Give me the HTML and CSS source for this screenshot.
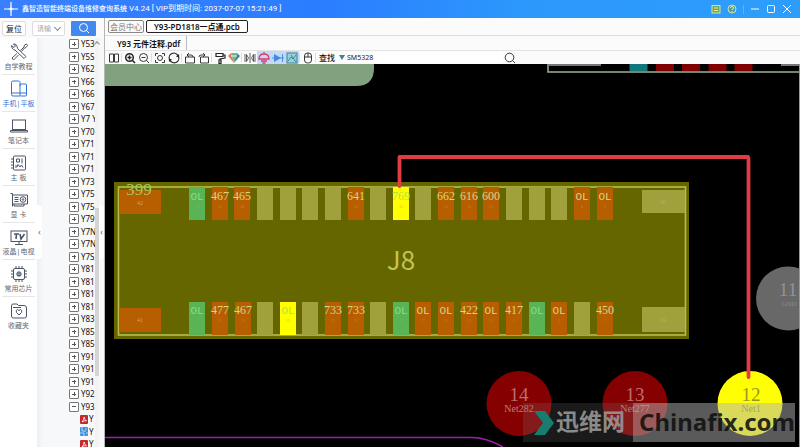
FILE: index.html
```html
<!DOCTYPE html>
<html lang="zh-CN">
<head>
<meta charset="utf-8">
<title>鑫智造智能终端设备维修查询系统</title>
<link rel="stylesheet" href="styles.css">
</head>
<body>
<div class="app">
  <header class="titlebar">
    <svg class="logo" viewBox="0 0 14 14"><path d="M7 0v5M7 9v5M0 7h5M9 7h5" stroke="#fff" stroke-width="1.2"/><path d="M7 4l1 2 2 1-2 1-1 2-1-2-2-1 2-1z" fill="#fff"/></svg>
    <h1><span class="name">鑫智造智能终端设备维修查询系统</span> V4.24 [ VIP到期时间: 2037-07-07 15:21:49 ]</h1>
    <div class="window-buttons">
      <button aria-label="消息"><svg viewBox="0 0 10 10"><rect x="1" y="1.5" width="8" height="7.500" fill="#6aa870" stroke="#d5e6a0"/><path d="M3 4h4M3 6.500h4" stroke="#ffe66b"/></svg></button>
      <button aria-label="帮助"><svg viewBox="0 0 10 10"><circle cx="5" cy="5" r="4" fill="#4f9dab" stroke="#cfe4a8"/><path d="M3.500 4q0-1.500 1.500-1.500T6.500 4Q6.500 5 5 5.500V6M5 7v1" stroke="#f3e98c" fill="none"/></svg></button>
      <span class="rule"></span>
      <button aria-label="最小化"><svg viewBox="0 0 10 10"><path d="M1 5h8" stroke="#fff"/></svg></button>
      <button aria-label="最大化"><svg viewBox="0 0 10 10"><rect x="1.500" y="1.500" width="7" height="7" rx="1" fill="none" stroke="#fff"/></svg></button>
      <button aria-label="关闭"><svg viewBox="0 0 10 10"><path d="M1 1l8 8M9 1L1 9" stroke="#fff"/></svg></button>
    </div>
  </header>

  <div class="body">
    <aside class="side">
      <form class="filter">
        <button type="button" class="reset">复位</button>
        <span class="pick"><select aria-label="品牌"><option>请输</option></select></span>
        <button type="button" class="find" aria-label="搜索"><svg viewBox="0 0 12 12"><circle cx="5.500" cy="5.500" r="4" fill="none" stroke="#fff"/><path d="M8.500 8.500l2.500 2.500" stroke="#fff"/></svg></button>
      </form>
      <div class="columns">
        <nav class="menu">
          <a href="#"><svg viewBox="0 0 20 18"><path d="M6 7l9 8.500 2-2L8.500 5.500M6 7Q3 7 2.500 2.500L5 4.500 6.500 3 4.500 1Q8 .5 8.500 5.500M11.500 7.500L15 4l.5-2L17.500 1 18.500 2.500 17 4.500 15.500 5 12.500 8.500M8 10.500L3 15l1.500 2 5-5"/></svg><span>自学教程</span></a>
          <a href="#" class="on"><svg viewBox="0 0 20 18"><path d="M11 6V2.500Q11 1 9.500 1H4Q2.500 1 2.500 2.500v12Q2.500 16 4 16h7M2.500 13H11"/><rect x="11" y="4" width="6.500" height="12" rx="1"/><path d="M11 13h6.500"/></svg><span>手机|平板</span></a>
          <a href="#"><svg viewBox="0 0 20 18"><rect x="3.500" y="3" width="13" height="9.500"/><path d="M1.500 13.500h17v1.500h-17z"/></svg><span>笔记本</span></a>
          <a href="#"><svg viewBox="0 0 20 18"><rect x="4.500" y="2" width="12" height="14" rx="1"/><path d="M2 5h3M2 8h3M2 11h3M2 14h3M7.500 5h3v3h-3zM13 4.500v5M8 13l1-2.500L11 13l1.500-2 1.500 2.500M7 11v3"/></svg><span>主 板</span></a>
          <a href="#"><svg viewBox="0 0 20 18"><path d="M1.500 2.500h2v13M3.500 4h15v9h-15M5 13v2h10v-2M5.500 6.500h4M5.500 8.500h4M5.500 10.500h4"/><circle cx="14" cy="8.500" r="2.800"/><circle cx="14" cy="8.500" r=".8"/></svg><span>显 卡</span></a>
          <a href="#"><svg viewBox="0 0 20 18"><rect x="2" y="3" width="16" height="10.500"/><path d="M10 13.500v2.500M6 16.500h8"/><path d="M5 6h5M7.500 6L7 11M11 6l1 5 3.500-5" stroke-width="1.600"/></svg><span>液晶|电视</span></a>
          <a href="#"><svg viewBox="0 0 20 18"><rect x="4.500" y="3.500" width="11" height="11" rx="1.500"/><circle cx="10" cy="9" r="2.200"/><path d="M9 8h2v2.500H9zM7 3V1M10 3V1M13 3V1M7 15v2M10 15v2M13 15v2M4 6H2M4 9H2M4 12H2M16 6h2M16 9h2M16 12h2"/></svg><span>常用芯片</span></a>
          <a href="#"><svg viewBox="0 0 20 18"><path d="M2.500 4Q2.500 2 4 2h4l1.500 1.500H15Q17.500 3.500 17.500 6v8q0 2-2 2h-11q-2 0-2-2zM4 5.500h8"/><path d="M10 13L7.500 10.500Q6.500 8 8.500 7.500L10 8.500 11.500 7.500Q13.500 8 12.500 10.500z"/></svg><span>收藏夹</span></a>
        </nav>
        <div class="handle"><button aria-label="收起菜单">‹</button></div>
        <ul class="tree">
          <li>Y53</li><li>Y5S</li><li>Y62</li><li>Y66</li><li>Y66</li><li>Y67</li><li>Y7 Y</li><li>Y70</li><li>Y71</li><li>Y71</li>
          <li>Y71</li><li>Y73</li><li>Y75</li><li>Y75</li><li>Y79</li><li>Y7N</li><li>Y7N</li><li>Y7S</li><li>Y81</li><li>Y81</li>
          <li>Y81</li><li>Y81</li><li>Y83</li><li>Y85</li><li>Y85</li><li>Y91</li><li>Y91</li><li>Y91</li><li>Y92</li><li class="open">Y93</li>
          <li class="file"><svg viewBox="0 0 8 9"><rect width="8" height="9" rx="1" fill="#c5282d"/><path d="M2 7Q4 5 4 2q1 3 2.500 4Q4 5 2 7" stroke="#fff" fill="none" stroke-width=".8"/></svg>Y</li>
          <li class="file"><svg viewBox="0 0 8 9"><rect width="8" height="9" rx="1" fill="#3f8fdd"/><path d="M2 0v4h4M0 6h4v3M6 1v2M6 6h2" stroke="#cfe6fb" fill="none" stroke-width=".8"/></svg>Y</li>
          <li class="file"><svg viewBox="0 0 8 9"><rect width="8" height="9" rx="1" fill="#c5282d"/><path d="M2 7Q4 5 4 2q1 3 2.500 4Q4 5 2 7" stroke="#fff" fill="none" stroke-width=".8"/></svg>Y</li>
        </ul>
        <div class="scroll"><span class="up"></span><span class="thumb"></span></div>
        <div class="handle narrow"><button aria-label="收起列表">‹</button></div>
      </div>
    </aside>

    <main class="work">
      <div class="tabs"><button class="muted">会员中心</button><button class="current">Y93-PD1818一点通.pcb</button></div>
      <div class="doc-tabs"><button>Y93 元件注释.pdf</button></div>
      <div class="toolbar">
        <button aria-label="分栏"><svg viewBox="0 0 12 12"><path d="M1.500 2h4v8h-4zM6.500 2h4v8h-4z"/></svg></button><i></i>
        <button aria-label="放大"><svg viewBox="0 0 12 12"><circle cx="5.500" cy="5.500" r="3.800" stroke-width="1.500"/><path d="M8.500 8.500L11 11M3.500 5.500h4M5.500 3.500v4" stroke-width="1.500"/></svg></button>
        <button aria-label="缩小"><svg viewBox="0 0 12 12"><circle cx="5.500" cy="5.500" r="4"/><path d="M8.500 8.500L11 11M3.500 5.500h4"/></svg></button><i></i>
        <button aria-label="适应"><svg viewBox="0 0 12 12"><path d="M1.500 4V1.500H4M8 1.500h2.500V4M10.500 8v2.500H8M4 10.500H1.500V8"/><circle cx="6" cy="6" r="2.500"/></svg></button>
        <button aria-label="刷新"><svg viewBox="0 0 12 12"><path d="M1.500 7.500A4.500 4.500 0 0 1 10 4M10.500 4.500A4.500 4.500 0 0 1 2 8M8.500 4.500h2V2.500M3.500 7.500h-2v2" stroke-width="1.200"/></svg></button><i></i>
        <button aria-label="左转"><svg viewBox="0 0 12 12"><path d="M1.500 5h9v6h-9zM3 3h4q2 0 2 2M5 1L3 3l2 2"/></svg></button>
        <button aria-label="右转"><svg viewBox="0 0 12 12"><path d="M2.500 5h8v6h-8zM1 5q0-2 2-2h4M5 1l2 2-2 2"/></svg></button><i></i>
        <button aria-label="颜色"><svg viewBox="0 0 12 12"><path d="M2 1.500h7v3H2zM9 3h2v3L6 7v1M5 8h2v3.500H5z" stroke-width="1.200"/></svg></button>
        <button aria-label="图层"><svg viewBox="0 0 12 12"><path d="M0 4l3-3 3 10z" fill="#d98452" stroke="none"/><path d="M3 1h6L6 11z" fill="#69b59c" stroke="none"/><path d="M9 1l3 3-6 7z" fill="#398b83" stroke="none"/><path d="M3 4h6" stroke="#fff"/></svg></button><i></i>
        <button aria-label="镜像"><svg viewBox="0 0 12 12"><path d="M1 2v8M11 2v8M2.500 2.500L4.500 6l-2 3.500zM9.500 2.500L7.500 6l2 3.500zM6 1v10" stroke-width=".7"/></svg></button>
        <button aria-label="地线" class="active"><svg viewBox="0 0 12 12"><path d="M1 7Q1 2 6 2t5 5zM6 0v2M3 9h6M4.500 11h3" stroke="#d63d67" stroke-width="1.300"/></svg></button>
        <button aria-label="二极管" class="active"><svg viewBox="0 0 12 12"><path d="M0 6h12M10.500 2v8" stroke="#4289df"/><path d="M2 2l7 4-7 4z" fill="#4289df" stroke="none"/></svg></button>
        <button aria-label="图片" class="active"><svg viewBox="0 0 12 12"><rect x="1" y="1" width="10" height="10" fill="#9bd0d7" stroke="#347996"/><path d="M2 9l3-4 2 2 3-4M5 3l5 7" stroke="#28839b"/></svg></button><i></i>
        <button aria-label="鼠标"><svg viewBox="0 0 12 12"><rect x="2.500" y="1" width="7" height="10" rx="3"/><path d="M2.500 5h7M6 1v4"/></svg></button><i></i>
        <label for="query">查找</label><span class="drop"></span>
        <input id="query" type="text" value="SM5328">
        <button aria-label="查找"><svg viewBox="0 0 12 12"><circle cx="5.500" cy="5.500" r="4.300"/><path d="M8.500 8.500L11 11"/></svg></button>
      </div>
      <div class="canvas">
        <svg class="board" viewBox="105 64 695 383" preserveAspectRatio="xMinYMin slice">
          <path d="M105 64h269v4q0 18-18 18H105z" fill="#81a17f"/>
          <path d="M548 64v8h252" fill="none" stroke="#9fb098" stroke-width="1.500"/>
          <path d="M549 65h52M781 65h19" stroke="#777" stroke-width="2"/>
          <path d="M629.500 64h18v7h-18z" fill="#10787a"/>
          <path d="M656 64h18v7h-18zM682 64h18v7h-18zM708.500 64h18v7h-18zM734.500 64h18v7h-18z" fill="#7e0000"/>

          <rect x="114" y="182" width="575" height="157" fill="#666600"/>
          <rect x="118.500" y="187" width="567" height="148" fill="none" stroke="#b9bd4b" stroke-width="1.600"/>
          <g class="o"><rect x="119" y="190" width="42" height="24"/><rect x="119" y="308" width="42" height="24"/></g>
          <g class="k"><rect x="642" y="190" width="43" height="23"/><rect x="642" y="307" width="43" height="25"/></g>
          <g class="pads">
            <g class="g"><rect x="189" y="187"/><rect x="189" y="302"/><rect x="393" y="302"/><rect x="529" y="302"/></g>
            <g class="y"><rect x="393" y="187"/><rect x="280" y="302"/></g>
            <g class="k"><rect x="257" y="187"/><rect x="280" y="187"/><rect x="302" y="187"/><rect x="325" y="187"/><rect x="370" y="187"/><rect x="415" y="187"/><rect x="506" y="187"/><rect x="529" y="187"/><rect x="551" y="187"/><rect x="257" y="302"/><rect x="302" y="302"/><rect x="370" y="302"/><rect x="574" y="302"/></g>
            <g class="o"><rect x="212" y="187"/><rect x="234" y="187"/><rect x="348" y="187"/><rect x="438" y="187"/><rect x="461" y="187"/><rect x="483" y="187"/><rect x="574" y="187"/><rect x="597" y="187"/><rect x="212" y="302"/><rect x="235" y="302"/><rect x="325" y="302"/><rect x="348" y="302"/><rect x="415" y="302"/><rect x="438" y="302"/><rect x="461" y="302"/><rect x="483" y="302"/><rect x="506" y="302"/><rect x="551" y="302"/><rect x="597" y="302"/></g>
          </g>
          <g class="val">
            <text x="220" y="200">467</text><text x="242" y="200">465</text><text x="356" y="200">641</text><text x="401" y="200" class="hit">769</text><text x="446" y="200">662</text><text x="469" y="200">616</text><text x="491" y="200">600</text>
            <text x="220" y="314">477</text><text x="243" y="314">467</text><text x="333" y="314">733</text><text x="356" y="314">733</text><text x="469" y="314">422</text><text x="514" y="314">417</text><text x="605" y="314">450</text>
          </g>
          <g class="val ol">
            <text x="197" y="200" class="gr">OL</text><text x="582" y="200">OL</text><text x="605" y="200">OL</text>
            <text x="197" y="314" class="gr">OL</text><text x="288" y="314" class="hit">OL</text><text x="401" y="314" class="gr">OL</text><text x="423" y="314">OL</text><text x="446" y="314">OL</text><text x="491" y="314">OL</text><text x="537" y="314" class="gr">OL</text><text x="559" y="314">OL</text>
          </g>
          <g class="pin">
            <text x="197" y="208">38</text><text x="220" y="208">36</text><text x="242" y="208">34</text><text x="265" y="208">32</text><text x="288" y="208">30</text><text x="310" y="208">28</text><text x="333" y="208">26</text><text x="356" y="208">24</text><text x="378" y="208">22</text><text x="401" y="208">20</text><text x="423" y="208">18</text><text x="446" y="208">16</text><text x="469" y="208">14</text><text x="491" y="208">12</text><text x="514" y="208">10</text><text x="537" y="208">8</text><text x="559" y="208">6</text><text x="582" y="208">4</text><text x="605" y="208">2</text>
            <text x="197" y="322">37</text><text x="220" y="322">35</text><text x="243" y="322">33</text><text x="265" y="322">31</text><text x="288" y="322">29</text><text x="310" y="322">27</text><text x="333" y="322">25</text><text x="356" y="322">23</text><text x="378" y="322">21</text><text x="401" y="322">19</text><text x="423" y="322">17</text><text x="446" y="322">15</text><text x="469" y="322">13</text><text x="491" y="322">11</text><text x="514" y="322">9</text><text x="537" y="322">7</text><text x="559" y="322">5</text><text x="582" y="322">3</text><text x="605" y="322">1</text>
          </g>
          <g class="corner"><text x="140" y="205">42</text><text x="140" y="322">41</text><text x="663" y="204" class="dim">40</text><text x="663" y="322" class="dim">39</text></g>
          <text class="big" x="139" y="195">399</text>
          <text class="ref" x="401" y="270">J8</text>

          <circle cx="519" cy="403.500" r="32.500" fill="#850000"/><circle cx="635" cy="403.500" r="32.500" fill="#850000"/>
          <circle cx="750" cy="403.500" r="32.500" fill="#ffff00"/><circle cx="788" cy="298.500" r="32" fill="#686868"/>
          <g class="num"><text x="519" y="401">14</text><text x="635" y="401">13</text><text x="751" y="401" class="sel">12</text><text x="788" y="296" class="gnd">11</text></g>
          <g class="net"><text x="519" y="412">Net282</text><text x="635" y="412">Net277</text><text x="751" y="412" class="sel">Net1</text></g>
          <text class="gnd-net" x="789" y="306">GND</text>
          <path d="M399.500 186V157H748l.5 1.500V377" fill="none" stroke="#df3d42" stroke-width="3.800" stroke-linecap="round" stroke-linejoin="round"/>
          <path d="M105 437.500h365Q486 437 503 447" fill="none" stroke="#a21cae" stroke-width="1.500"/>
          <path d="M799.500 64v383" stroke="#999"/>

          <path d="M523 403h110v39H523z" fill="#808080" fill-opacity=".2"/>
          <path d="M633 403h162v39H633z" fill="#b4b4b4" fill-opacity=".5"/>
          <path d="M534 411h11l9 12-9 12h-11l9-12z" fill="#167d70"/>
          <text class="mark-cn" x="556" y="430">迅维网</text>
          <text class="mark-en" x="639" y="431">Chinafix.com</text>
        </svg>
      </div>
    </main>
  </div>
</div>
</body>
</html>
```
FILE: styles.css
```css
* { box-sizing: border-box; }
body { margin: 0; font-family: "Noto Sans", "Noto Sans CJK SC", sans-serif; font-size: 8px; color: #111; }
button { padding: 0; border: 0; background: none; font: inherit; color: inherit; }
svg { display: block; }

.app { display: flex; flex-direction: column; height: 100vh; overflow: hidden; background: #fbfbfb; }
.titlebar { display: flex; align-items: center; flex: none; height: 18px; padding: 0 8px 0 4px; color: #fff; background: linear-gradient(90deg, #397fff, #2b7dff 40%, #2c98fc 65%, #2d9dfb); }
.logo { width: 14px; height: 14px; margin-right: 4px; }
h1 { flex: 1; margin: 0; font-family: Roboto, "Noto Sans CJK SC", sans-serif; font-size: 8px; font-weight: 400; line-height: 16px; white-space: pre; }
.name { font-size: 7px; font-weight: 500; }
.window-buttons { display: flex; align-items: center; gap: 6px; }
.window-buttons button { width: 10px; height: 10px; }
.rule { width: 1px; height: 9px; background: #63aef8; }

.body { display: flex; flex: 1; min-height: 0; }
.side { display: flex; flex-direction: column; flex: none; width: 105px; border-right: 1px solid #b5b5b5; background: #f7f8fa; }
.filter { display: flex; align-items: center; flex: none; height: 20px; padding: 0 2px; background: #fafafa; }
.reset { width: 24px; height: 15px; border: 1px solid #ddd; border-radius: 2px; background: #fff; }
.pick { display: flex; align-items: center; width: 33px; height: 15px; margin: 0 6px; padding-right: 4px; border: 1px solid #ddd; border-radius: 2px; background: #fff; }
.pick::after { content: ""; flex: none; width: 4px; height: 4px; margin-bottom: 2px; border: solid #888; border-width: 0 1px 1px 0; transform: rotate(45deg); }
select { flex: 1; min-width: 0; height: 13px; padding: 0 0 0 4px; border: 0; background: none; appearance: none; color: #aaa; font: inherit; font-size: 7px; }
.find { display: grid; place-items: center; width: 25px; height: 15px; border-radius: 1px; background: #4388ee; }
.find svg { width: 12px; height: 12px; }

.columns { display: flex; flex: 1; min-height: 0; }
.menu { flex: none; width: 37px; padding: 0 2px; background: #fff; }
.menu a { display: flex; flex-direction: column; align-items: center; height: 37px; padding-top: 5px; border-bottom: 1px solid #e6e6e6; color: #626873; font-size: 7px; line-height: 10px; text-decoration: none; white-space: nowrap; }
.menu a:last-child { border-bottom: 0; }
.menu svg { width: 20px; height: 18px; margin-bottom: 1px; fill: none; stroke: #4b5565; stroke-width: 1; }
.menu .on { color: #2f73d8; }
.menu .on svg { stroke: #2f73d8; }
.handle { display: flex; align-items: center; flex: none; width: 6px; padding-bottom: 22px; background: linear-gradient(90deg, #eceef3, #f7f8fa); }
.handle button { width: 5px; height: 54px; border-radius: 0 4px 4px 0; background: #fff; color: #555; }
.tree { flex: 1; min-width: 0; margin: 0; padding: 0 0 0 26px; overflow: hidden; list-style: none; }
.tree li { display: flex; align-items: center; gap: 2px; height: 12px; line-height: 12px; white-space: nowrap; }
.tree li:nth-child(even) { height: 13px; }
.tree li::before { content: ""; flex: none; width: 8px; height: 8px; border: 1px solid #777; border-radius: 1px; background: linear-gradient(#555, #555) center / 4px 1px no-repeat, linear-gradient(#555, #555) center / 1px 4px no-repeat, #fff; }
.tree li.open::before { background: linear-gradient(#555, #555) center / 4px 1px no-repeat, #fff; }
.tree li.file { padding-left: 11px; gap: 1px; }
.tree li.file::before { display: none; }
.tree li svg { flex: none; width: 8px; height: 9px; }
.scroll { display: flex; flex-direction: column; align-items: center; flex: none; width: 4px; background: #f3f3f3; }
.up { width: 4px; height: 4px; margin-top: 4px; border: solid #888; border-width: 1px 0 0 1px; transform: rotate(45deg); }
.thumb { width: 4px; height: 168px; margin-top: 162px; background: #d4d4d6; }
.narrow { width: 5px; background: #f7f8fa; }

.work { display: flex; flex-direction: column; flex: 1; min-width: 0; }
.tabs { display: flex; align-items: center; gap: 2px; flex: none; height: 18px; padding: 0 3px; border-bottom: 1px solid #ddd; }
.tabs button { height: 13px; padding: 0 1px; border: 1px solid #888; border-radius: 2px; line-height: 11px; }
.tabs .muted { color: #777; }
.tabs .current { padding: 0 7px; border-color: #222; font-weight: 600; background: #fff; }
.doc-tabs { display: flex; flex: none; height: 15px; border-bottom: 1px solid #e4e4e4; }
.doc-tabs button { padding: 0 6px 0 12px; border-right: 1px solid #bbb; font-weight: 600; }
.toolbar { display: flex; align-items: center; flex: none; height: 13px; padding-left: 2px; }
.toolbar button { display: grid; place-items: center; flex: none; width: 14px; height: 13px; }
.toolbar svg { width: 12px; height: 12px; fill: none; stroke: #222; stroke-width: .9; }
.toolbar i { width: 1px; height: 9px; margin-right: 1px; background: #ddd; }
.toolbar .active { background: #c3d9f7; }
.toolbar label { margin: 0 4px 0 2px; font-weight: 500; }
.drop { border: 3px solid transparent; border-top: 5px solid #477ba0; border-bottom: 0; }
.toolbar input { width: 158px; height: 11px; padding: 0 2px; border: 0; background: #fff; font: inherit; font-size: 7px; color: #222; }

.canvas { flex: 1; min-height: 0; background: #000; }
.board { width: 100%; height: 100%; }
.pads rect { width: 16px; height: 33px; }
.o { fill: #b65e00; }
.k { fill: #a0a03c; }
.g { fill: #58b454; }
.y { fill: #ffff00; }
.board text { text-anchor: middle; }
.val { font: 12px "Liberation Serif", serif; fill: #d2d884; }
.ol { font: 11px "Liberation Mono", monospace; }
.gr { fill: #8cdc8c; }
.hit { fill: #b4e23c; }
.pin { font: 4px "Liberation Serif", serif; fill: #c8a050; fill-opacity: .6; }
.corner { font: 6px "Liberation Serif", serif; fill: #d0a45c; }
.dim { fill: #b4b456; }
.big { font: 17px "Liberation Serif", serif; fill: #a4c860; }
.ref { font: 26px "Noto Sans CJK SC", sans-serif; fill: #c0c454; }
.num { font: 19px "Liberation Serif", serif; fill: #bb7070; }
.net { font: 10px "Liberation Serif", serif; fill: #b98080; }
.sel { fill: #96962a; }
.gnd { fill: #929292; }
.gnd-net { font: 7px "Liberation Serif", serif; fill: #8a8a8a; }
.board .mark-cn { font: 700 23px "Noto Sans CJK SC", sans-serif; fill: #9a9a9a; fill-opacity: .9; text-anchor: start; }
.board .mark-en { font: 700 24px "Noto Sans", sans-serif; fill: #101010; fill-opacity: .9; text-anchor: start; }
```
